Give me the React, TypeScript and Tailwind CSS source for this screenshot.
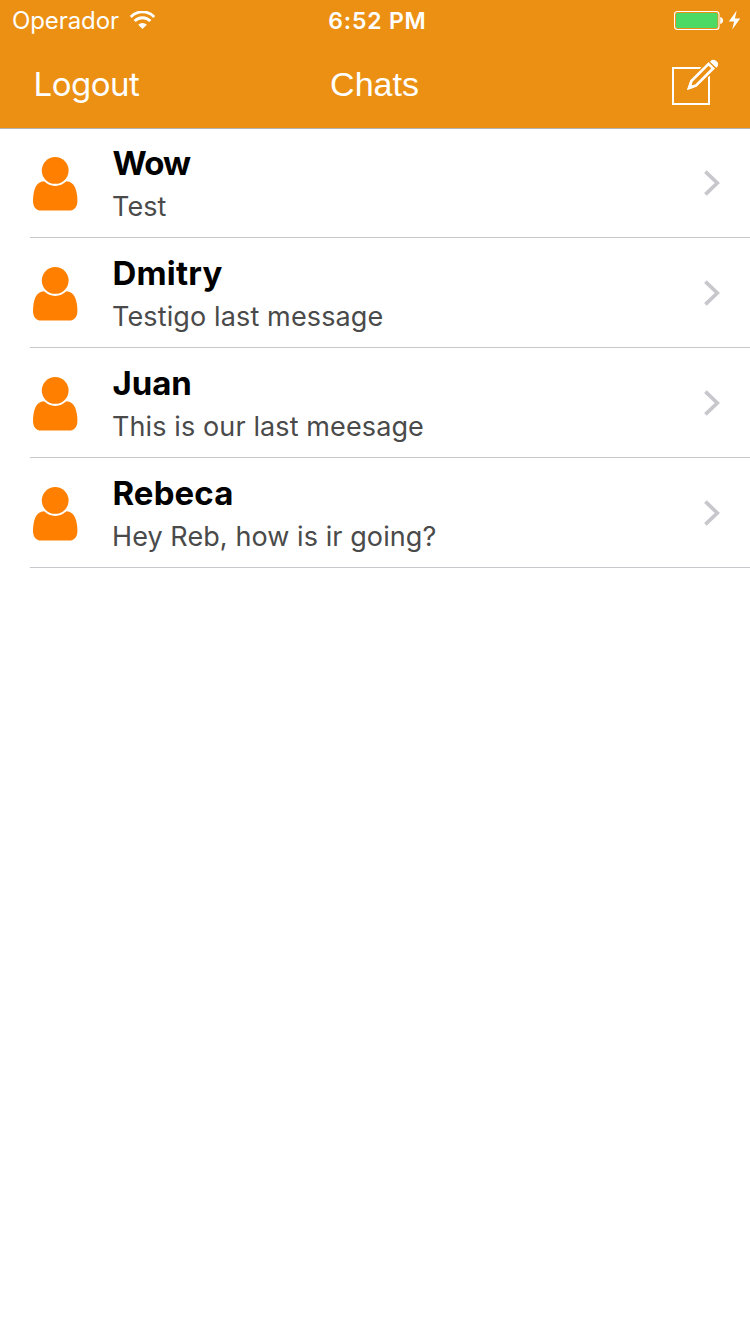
type Chat = { name: string; message: string; nameClass: string; messageClass: string };

const chats: Chat[] = [
  { name: "Wow", message: "Test", nameClass: "tracking-[-0.9px]", messageClass: "tracking-[0.1px]" },
  { name: "Dmitry", message: "Testigo last message", nameClass: "tracking-[0.2px]", messageClass: "tracking-[0.13px]" },
  { name: "Juan", message: "This is our last meesage", nameClass: "tracking-[-0.1px]", messageClass: "tracking-[0.11px]" },
  { name: "Rebeca", message: "Hey Reb, how is ir going?", nameClass: "tracking-[0.1px]", messageClass: "tracking-[0.08px]" },
];

function WifiIcon() {
  return (
    <svg className="ml-[11px] h-[18px] w-[25px]" viewBox="0 0 25 18" fill="none" stroke="white">
      <path d="M0.8 5.9 A16.2 16.2 0 0 1 24.2 5.9" strokeWidth="2.9" />
      <path d="M4.6 10.1 A11 11 0 0 1 20.4 10.1" strokeWidth="2.9" />
      <path d="M12.5 18 L8.2 13.7 A6.1 6.1 0 0 1 16.8 13.7 Z" fill="white" stroke="none" />
    </svg>
  );
}

function BatteryIcon() {
  return (
    <svg className="h-[20px] w-[68px]" viewBox="0 0 68 20">
      <rect x="0.5" y="1.5" width="44.5" height="18" rx="3" fill="none" stroke="white" strokeWidth="1.1" />
      <rect x="2" y="3" width="41.5" height="15" rx="1.6" fill="#4cd964" />
      <path d="M46.2 7 C50 7.6 50 13.4 46.2 14 Z" fill="white" />
      <path d="M62.7 0.5 L54.8 11.5 H60.1 L58.2 19.5 L66.2 8.4 H60.9 Z" fill="white" />
    </svg>
  );
}

function ComposeIcon() {
  return (
    <svg className="mb-[4px] h-[48px] w-[48px]" viewBox="0 0 48 48" fill="none" stroke="white">
      <path d="M32 10 H3 V46 H39 V18" strokeWidth="2" />
      <path d="M38.4 5.4 L21.5 22.3 L18.6 30.4 L26.7 27.5 L43.6 10.6 Z" fill="#eb9013" stroke="#eb9013" strokeWidth="4.5" />
      <path d="M38.6 5.9 L21.4 23.1 L19.2 29.8 L25.9 27.6 L43.1 10.4 Z" fill="#eb9013" strokeWidth="2.7" />
      <path d="M17 32 L19.6 24.8 L24.2 29.4 Z" fill="white" stroke="none" />
      <path d="M40.9 2.7 C43.6 -0.6 51.2 5.2 47.2 8.8 L46.3 9.7 L39.9 3.7 Z" fill="white" stroke="none" />
      <path d="M39.1 4.3 L45.5 10.5" stroke="#eb9013" strokeWidth="0.7" />
    </svg>
  );
}

function PersonIcon() {
  return (
    <svg className="h-[56px] w-[46px] shrink-0" viewBox="0 0 46 56" fill="#ff8000">
      <path d="M12 25.3 H34.4 C42.5 25.3 45.4 35 45.4 45 C45.4 51.5 41.5 54.6 37.5 54.6 H8.8 C4.8 54.6 1 51.5 1 45 C1 35 3.9 25.3 12 25.3 Z" />
      <circle cx="23.2" cy="14.4" r="15.5" fill="white" />
      <circle cx="23.2" cy="14.4" r="13.4" />
    </svg>
  );
}

function Chevron() {
  return (
    <svg className="h-[28px] w-[18px]" viewBox="0 0 18 28" fill="none" stroke="#c7c7cc" strokeWidth="3.7">
      <path d="M2.4 2.6 L14.3 14 L2.4 25.4" />
    </svg>
  );
}

function ChatRow({ chat }: { chat: Chat }) {
  return (
    <li className="ml-[30px] flex h-[110px] items-center border-b border-[#c8c7cc]">
      <div className="ml-[2px] mt-[2px]">
        <PersonIcon />
      </div>
      <div className="ml-[34px] grow pt-[5px]">
        <h2 className={`pl-[0.5px] text-[33px] font-bold leading-[43px] text-black ${chat.nameClass}`}>{chat.name}</h2>
        <p className={`text-[27px] leading-[44px] text-[#4a4a4a] ${chat.messageClass}`}>{chat.message}</p>
      </div>
      <div className="mr-[29px]">
        <Chevron />
      </div>
    </li>
  );
}

export default function App() {
  return (
    <main className="min-h-[1334px] w-[750px] bg-white font-['Inter','Liberation_Sans',sans-serif]">
      <header className="relative h-[128px] bg-[#eb9013] text-white shadow-[0_1px_0_#b2b2b2]">
        <div className="grid h-10 grid-cols-3 items-center">
          <div className="flex items-center pl-3">
            <span className="pt-[2px] text-[24px] leading-[38px] tracking-[-0.1px]">Operador</span>
            <WifiIcon />
          </div>
          <time className="pl-[5px] pt-[2px] text-center text-[23px] font-semibold leading-[38px] tracking-[0.8px]">6:52 PM</time>
          <div className="flex justify-end pr-2">
            <BatteryIcon />
          </div>
        </div>
        <nav className="grid h-[88px] grid-cols-3 items-center">
          <button className="pb-px pl-[33.5px] text-left text-[33px] leading-[44px] tracking-[-0.5px]">Logout</button>
          <h1 className="pr-px text-center font-['Liberation_Sans',sans-serif] text-[34px] leading-[44px]">Chats</h1>
          <button className="flex justify-end pr-[32px]" aria-label="New chat">
            <ComposeIcon />
          </button>
        </nav>
      </header>
      <ul>
        {chats.map((chat) => (
          <ChatRow key={chat.name} chat={chat} />
        ))}
      </ul>
    </main>
  );
}
